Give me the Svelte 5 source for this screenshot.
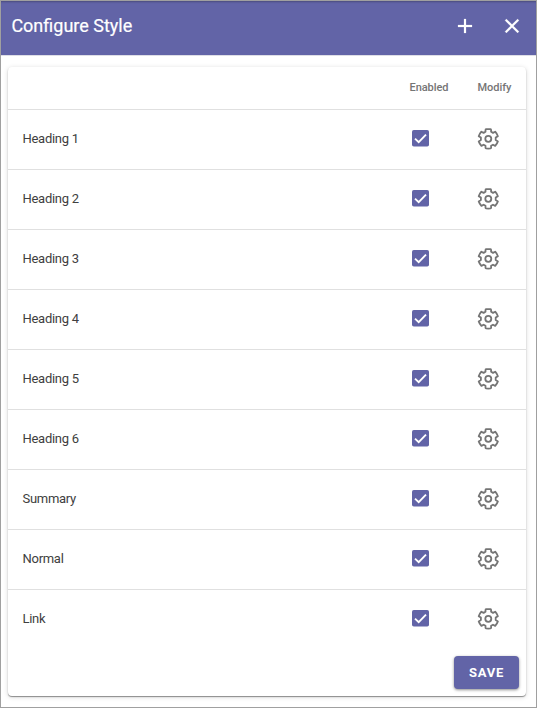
<script>
  const styles = ['Heading 1', 'Heading 2', 'Heading 3', 'Heading 4', 'Heading 5', 'Heading 6', 'Summary', 'Normal', 'Link'];
</script>

<div class="dialog">
  <header>
    <h1>Configure Style</h1>
    <svg class="add" viewBox="0 0 24 24"><path d="M19 13h-6v6h-2v-6H5v-2h6V5h2v6h6v2z" /></svg>
    <svg class="close" viewBox="0 0 24 24"><path d="M19 6.41L17.59 5 12 10.59 6.41 5 5 6.41 10.59 12 5 17.59 6.41 19 12 13.41 17.59 19 19 17.59 13.41 12z" /></svg>
  </header>
  <section class="card">
    <div class="row head">
      <span class="name"></span>
      <span class="enabled">Enabled</span>
      <span class="modify">Modify</span>
    </div>
    {#each styles as style}
      <div class="row">
        <span class="name">{style}</span>
        <span class="enabled">
          <svg class="check" viewBox="0 0 18 18">
            <rect x="0" y="0" width="17" height="16.6" rx="1.8" fill="#6264a7" />
            <path d="M3 8.6L6.7 12.2L14 4.7" fill="none" stroke="#fff" stroke-width="1.9" />
          </svg>
        </span>
        <span class="modify">
          <svg class="gear" viewBox="-0.3 0.2 24 24" fill="none" stroke="#757575" stroke-width="1.8" stroke-linejoin="round">
            <circle cx="12" cy="12" r="3" />
            <path d="M9.2 3.1Q9.2 2.5 9.8 2.4Q12 2.1 14.2 2.4Q14.8 2.5 14.8 3.1V5L16.7 6.1L18.9 4.9Q20.7 6.9 21.6 9.4L19.4 10.8V13.2L21.6 14.6Q20.7 17.1 18.9 19.1L16.7 17.9L14.8 19V20.9Q14.8 21.5 14.2 21.6Q12 21.9 9.8 21.6Q9.2 21.5 9.2 20.9V19L7.3 17.9L5.1 19.1Q3.3 17.1 2.4 14.6L4.6 13.2V10.8L2.4 9.4Q3.3 6.9 5.1 4.9L7.3 6.1L9.2 5Z" />
          </svg>
        </span>
      </div>
    {/each}
    <footer><button>SAVE</button></footer>
  </section>
</div>

<style>
  .dialog {
    box-sizing: border-box;
    width: 537px;
    height: 708px;
    border: 1px solid #a0a0a0;
    background: #fff;
    font-family: Roboto, sans-serif;
    overflow: hidden;
  }
  header {
    box-sizing: border-box;
    height: 54px;
    padding: 0 12px 4px 10.4px;
    display: flex;
    align-items: center;
    background: #6264a7;
    box-shadow: inset 0 2px 2px -1px rgba(0, 0, 0, 0.25), 0 1px 0 #dedee6;
  }
  h1 {
    flex: 1;
    margin: 0;
    color: #fff;
    font-size: 18px;
    font-weight: 400;
    line-height: 24px;
    -webkit-text-stroke: 0.2px #fff;
  }
  header svg { width: 24px; height: 24px; fill: #fff; stroke: #fff; stroke-width: 0.2; }
  .add { margin-right: 23px; }
  .card {
    box-sizing: border-box;
    width: 518px;
    height: 629px;
    margin: 12px 0 0 7px;
    border-radius: 4px;
    background: #fff;
    box-shadow: 0 1px 1px rgba(0, 0, 0, 0.4), 0 1px 5px rgba(0, 0, 0, 0.16);
  }
  .row {
    box-sizing: border-box;
    height: 60px;
    padding-bottom: 2px;
    display: flex;
    align-items: center;
    border-bottom: 1px solid #e0e0e0;
    color: #404040;
    font-size: 13px;
    letter-spacing: -0.28px;
  }
  .row:nth-last-child(2) { border-bottom: 0; height: 59px; }
  .head { height: 43px; color: #757575; font-size: 11px; font-weight: 500; letter-spacing: -0.05px; }
  .name { flex: 1; padding-left: 14.5px; }
  .enabled { width: 68px; }
  .modify { width: 48.5px; }
  .enabled, .modify { display: block; }
  svg { display: block; }
  .check { width: 18px; height: 18px; margin-left: 2.5px; }
  .gear { width: 24px; height: 24px; margin-left: -1.2px; }
  footer { display: flex; justify-content: flex-end; padding: 7px 7px 0 0; }
  button {
    width: 65px;
    height: 33px;
    padding: 0;
    border: 0;
    border-radius: 4px;
    background: #6264a7;
    box-shadow: 0 1px 3px rgba(0, 0, 0, 0.45);
    color: #fff;
    font: 700 13px Roboto, sans-serif;
    letter-spacing: 0.7px;
  }
</style>
